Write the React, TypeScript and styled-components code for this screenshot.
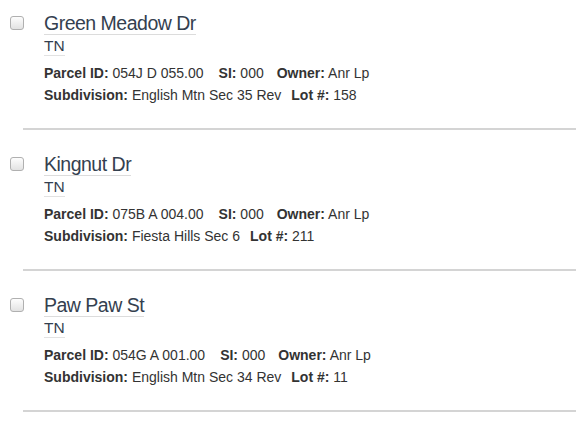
import React from 'react';
import styled, { createGlobalStyle } from 'styled-components';

const GlobalStyle = createGlobalStyle`
  html, body {
    margin: 0;
    padding: 0;
    background: #fff;
  }
  body {
    font-family: "Liberation Sans", Arial, sans-serif;
    color: #333;
  }
`;

const List = styled.div`
  padding: 12px 0 0 10px;
`;

const Item = styled.div`
  display: flex;
  align-items: flex-start;
`;

const Check = styled.input`
  appearance: none;
  width: 14px;
  height: 14px;
  margin: 4px 20px 0 0;
  flex-shrink: 0;
  border: 1px solid #b0b0b0;
  border-radius: 3px;
  background: linear-gradient(#fdfdfd, #e2e2e2);
  box-sizing: border-box;
`;

const Body = styled.div`
  display: flex;
  flex-direction: column;
  align-items: flex-start;
`;

const Street = styled.a`
  display: inline-block;
  font-size: 19.5px;
  line-height: 22px;
  letter-spacing: -0.5px;
  color: #34404f;
  text-decoration: none;
  border-bottom: 1px solid #dcdcdc;
`;

const State = styled.a`
  display: inline-block;
  margin-top: 2px;
  font-size: 15.5px;
  line-height: 18px;
  color: #34404f;
  text-decoration: none;
  border-bottom: 1px solid #e2e2e2;
`;

const Details = styled.div`
  margin-top: 6px;
  font-size: 14px;
  line-height: 22px;
  color: #333;
`;

const Field = styled.span<{ $gap?: number }>`
  margin-right: ${(p) => p.$gap ?? 12}px;
  white-space: nowrap;
`;

const Label = styled.b`
  font-weight: 700;
`;

const Divider = styled.hr`
  margin: 22px 0 23px 13px;
  border: 0;
  border-top: 2px solid #d4d4d4;
`;

type Parcel = {
  street: string;
  state: string;
  id: string;
  si: string;
  owner: string;
  subdivision: string;
  lot: string;
};

const parcels: Parcel[] = [
  {
    street: 'Green Meadow Dr',
    state: 'TN',
    id: '054J D 055.00',
    si: '000',
    owner: 'Anr Lp',
    subdivision: 'English Mtn Sec 35 Rev',
    lot: '158',
  },
  {
    street: 'Kingnut Dr',
    state: 'TN',
    id: '075B A 004.00',
    si: '000',
    owner: 'Anr Lp',
    subdivision: 'Fiesta Hills Sec 6',
    lot: '211',
  },
  {
    street: 'Paw Paw St',
    state: 'TN',
    id: '054G A 001.00',
    si: '000',
    owner: 'Anr Lp',
    subdivision: 'English Mtn Sec 34 Rev',
    lot: '11',
  },
];

const App = () => {
  return (
    <>
      <GlobalStyle />
      <List>
        {parcels.map((p) => (
          <div key={p.id}>
            <Item>
              <Check type="checkbox" />
              <Body>
                <Street href="#">{p.street}</Street>
                <State href="#">{p.state}</State>
                <Details>
                  <div>
                    <Field $gap={15}>
                      <Label>Parcel ID:</Label> {p.id}
                    </Field>
                    <Field $gap={13}>
                      <Label>SI:</Label> {p.si}
                    </Field>
                    <Field>
                      <Label>Owner:</Label> {p.owner}
                    </Field>
                  </div>
                  <div>
                    <Field $gap={10}>
                      <Label>Subdivision:</Label> {p.subdivision}
                    </Field>
                    <Field>
                      <Label>Lot #:</Label> {p.lot}
                    </Field>
                  </div>
                </Details>
              </Body>
            </Item>
            <Divider />
          </div>
        ))}
      </List>
    </>
  );
};

export default App;
